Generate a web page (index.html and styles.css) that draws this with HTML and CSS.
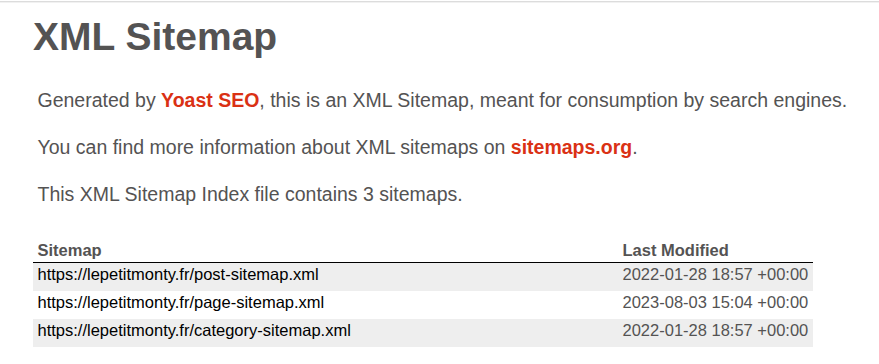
FILE: index.html
```html
<!DOCTYPE html>
<html lang="en">
<head>
<meta charset="utf-8">
<title>XML Sitemap</title>
<link rel="stylesheet" href="styles.css">
</head>
<body>
<div class="rule"></div>
<div id="content">
  <h1 class="title">XML Sitemap</h1>
  <p class="expl expl-first">Generated by <a href="#">Yoast SEO</a>, this is an XML Sitemap, meant for consumption by search engines.</p>
  <p class="expl">You can find more information about XML sitemaps on <a href="#">sitemaps.org</a>.</p>
  <p class="expl">This XML Sitemap Index file contains 3 sitemaps.</p>
  <table id="sitemap" class="sitemap">
    <thead>
      <tr>
        <th class="col-loc">Sitemap</th>
        <th class="col-mod">Last Modified</th>
      </tr>
    </thead>
    <tbody>
      <tr>
        <td><a href="#">https://lepetitmonty.fr/post-sitemap.xml</a></td>
        <td>2022-01-28 18:57 +00:00</td>
      </tr>
      <tr>
        <td><a href="#">https://lepetitmonty.fr/page-sitemap.xml</a></td>
        <td>2023-08-03 15:04 +00:00</td>
      </tr>
      <tr>
        <td><a href="#">https://lepetitmonty.fr/category-sitemap.xml</a></td>
        <td>2022-01-28 18:57 +00:00</td>
      </tr>
    </tbody>
  </table>
</div>
</body>
</html>
```
FILE: styles.css
```css
html { background: #fff; }
body {
  margin: 0;
  font-family: "Liberation Sans", Arial, Helvetica, sans-serif;
  font-size: 19.5px;
  color: #545353;
}
.rule {
  margin-top: 1px;
  height: 1px;
  background: #dcdcdc;
  border-bottom: 1px solid #f1f1f1;
}
#content {
  padding-left: 33px;
}
.title {
  margin: 11px 0 0;
  font-size: 39px;
  line-height: 45px;
  font-weight: bold;
  color: #545353;
}
.expl {
  margin: 23px 4.5px 0;
  line-height: 24px;
}
.expl-first { margin-top: 29px; }
.expl a {
  color: #da3114;
  font-weight: bold;
  text-decoration: none;
}
.sitemap {
  margin-top: 31px;
  border: none;
  border-collapse: collapse;
}
.sitemap th {
  text-align: left;
  font-size: 16.5px;
  font-weight: bold;
  line-height: 19px;
  padding: 4px 4.5px 2px;
  border-bottom: 1px solid #000;
  color: #545353;
  white-space: nowrap;
}
.sitemap .col-loc { width: 576px; }
.sitemap td {
  font-size: 16.5px;
  line-height: 19px;
  padding: 1.5px 4.5px 7.5px;
  color: #545353;
  white-space: nowrap;
}
.sitemap tbody tr:nth-child(odd) td { background-color: #eee; }
.sitemap td a {
  color: #000;
  text-decoration: none;
}
```
